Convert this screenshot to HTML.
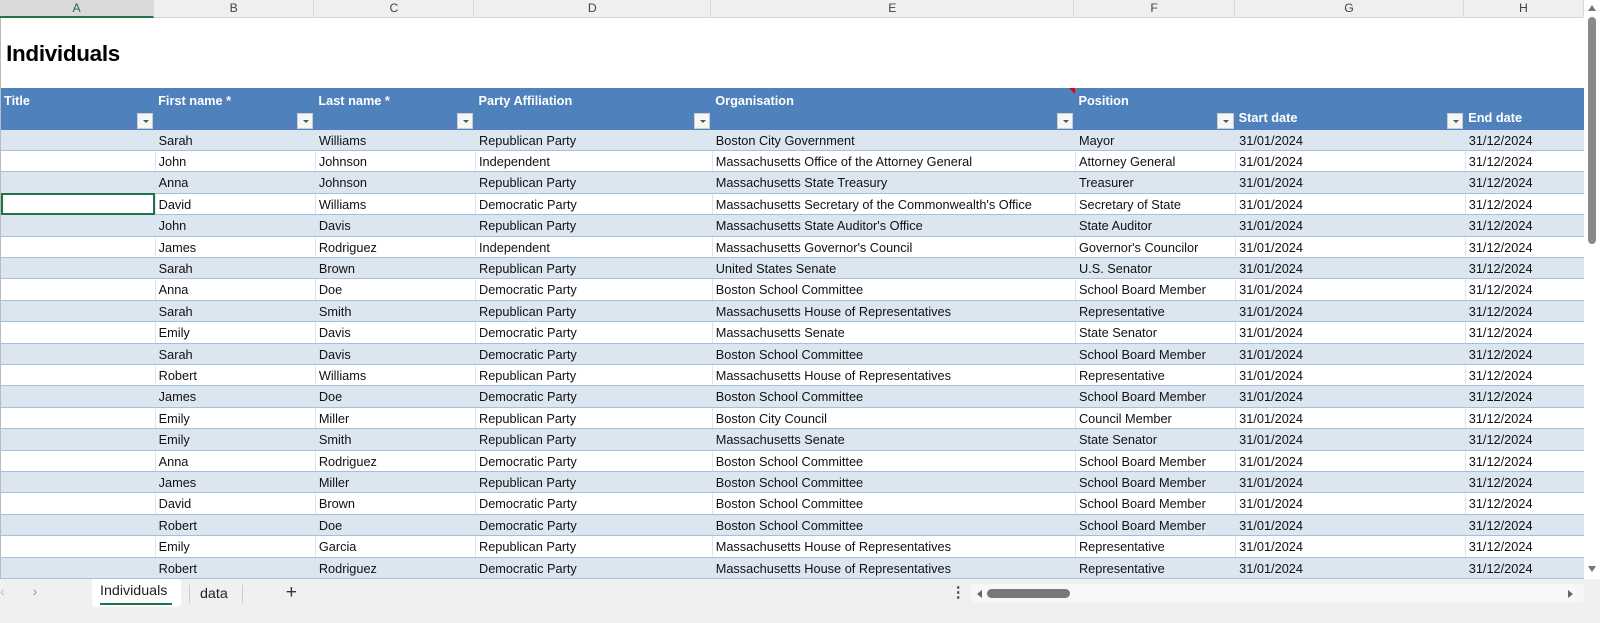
<!DOCTYPE html>
<html><head><style>
*{margin:0;padding:0;box-sizing:border-box}
body{width:1600px;height:611px;overflow:hidden;background:#fff;font-family:"Liberation Sans",sans-serif;position:relative}
#wrap{position:absolute;left:0;top:0;width:1568px;height:599px;zoom:1.0204}
#colh{position:absolute;left:0;top:0;height:18px;width:1552px;background:#efefef;border-bottom:1px solid #d4d4d4}
#colh div{position:absolute;top:0;height:18px;line-height:17px;text-align:center;font-size:12px;color:#444;border-right:1px solid #d8d8d8}
#sheet{position:absolute;left:0;top:18px;width:1552px;height:549px;background:#fff;overflow:hidden;border-left:1px solid #bbb}
h1{position:absolute;left:5px;top:22px;font-size:22px;font-weight:bold;color:#000;letter-spacing:-0.3px}
table{position:absolute;left:0;top:68px;border-collapse:collapse;table-layout:fixed;width:1552px;font-size:12.5px}
td{height:20px;padding:1px 3px 0;white-space:nowrap;overflow:hidden;border-right:1px solid #dfe5ee;border-bottom:1px solid #a7bfde;color:#111;line-height:19px}
tr.o td{background:#dce6f1}
tr.o td:first-child{border-right-color:#dce6f1}
tr.hd td{background:#4f81bd;color:#fff;font-weight:bold;height:41px;vertical-align:top;position:relative;border:none;padding-top:3px}
.dd{position:absolute;right:2px;bottom:1px;width:16px;height:15px;background:#f6f6f6;border:1px solid #ccc}
.dd:after{content:"";position:absolute;left:5px;top:6px;border-left:3px solid transparent;border-right:3px solid transparent;border-top:3px solid #555}
.b2{position:absolute;left:3px;bottom:2px}
#vs{position:absolute;left:1552px;top:0;width:16px;height:567px;background:#fff}
#bot{position:absolute;left:0;top:567px;width:1600px;height:44px;background:#f0f0f0}
</style></head><body>
<div id="wrap">
<div id="colh">
<div style="left:0;width:151px;background:#d9d9d9;color:#1e6e3c;border-bottom:2px solid #217346">A</div>
<div style="left:151px;width:157px">B</div><div style="left:308px;width:157px">C</div>
<div style="left:465px;width:232px">D</div><div style="left:697px;width:356px">E</div>
<div style="left:1053px;width:157px">F</div><div style="left:1210px;width:225px">G</div>
<div style="left:1435px;width:117px">H</div></div>
<div id="sheet">
<h1>Individuals</h1>
<table>
<colgroup><col style="width:151px"><col style="width:157px"><col style="width:157px"><col style="width:232px"><col style="width:356px"><col style="width:157px"><col style="width:225px"><col style="width:117px"></colgroup>
<tr class="hd"><td>Title<span class="dd"></span></td><td>First name *<span class="dd"></span></td><td>Last name *<span class="dd"></span></td><td>Party Affiliation<span class="dd"></span></td><td>Organisation<span class="dd"></span><span style="position:absolute;right:0;top:0;border-left:6px solid transparent;border-top:6px solid #e00"></span></td><td>Position<span class="dd"></span></td><td><span class="b2">Start date</span><span class="dd"></span></td><td><span class="b2">End date</span></td></tr>
<tr class="o"><td></td><td>Sarah</td><td>Williams</td><td>Republican Party</td><td>Boston City Government</td><td>Mayor</td><td>31/01/2024</td><td>31/12/2024</td></tr>
<tr><td></td><td>John</td><td>Johnson</td><td>Independent</td><td>Massachusetts Office of the Attorney General</td><td>Attorney General</td><td>31/01/2024</td><td>31/12/2024</td></tr>
<tr class="o"><td></td><td>Anna</td><td>Johnson</td><td>Republican Party</td><td>Massachusetts State Treasury</td><td>Treasurer</td><td>31/01/2024</td><td>31/12/2024</td></tr>
<tr><td style="outline:2px solid #217346;outline-offset:-2px"></td><td>David</td><td>Williams</td><td>Democratic Party</td><td>Massachusetts Secretary of the Commonwealth's Office</td><td>Secretary of State</td><td>31/01/2024</td><td>31/12/2024</td></tr>
<tr class="o"><td></td><td>John</td><td>Davis</td><td>Republican Party</td><td>Massachusetts State Auditor's Office</td><td>State Auditor</td><td>31/01/2024</td><td>31/12/2024</td></tr>
<tr><td></td><td>James</td><td>Rodriguez</td><td>Independent</td><td>Massachusetts Governor's Council</td><td>Governor's Councilor</td><td>31/01/2024</td><td>31/12/2024</td></tr>
<tr class="o"><td></td><td>Sarah</td><td>Brown</td><td>Republican Party</td><td>United States Senate</td><td>U.S. Senator</td><td>31/01/2024</td><td>31/12/2024</td></tr>
<tr><td></td><td>Anna</td><td>Doe</td><td>Democratic Party</td><td>Boston School Committee</td><td>School Board Member</td><td>31/01/2024</td><td>31/12/2024</td></tr>
<tr class="o"><td></td><td>Sarah</td><td>Smith</td><td>Republican Party</td><td>Massachusetts House of Representatives</td><td>Representative</td><td>31/01/2024</td><td>31/12/2024</td></tr>
<tr><td></td><td>Emily</td><td>Davis</td><td>Democratic Party</td><td>Massachusetts Senate</td><td>State Senator</td><td>31/01/2024</td><td>31/12/2024</td></tr>
<tr class="o"><td></td><td>Sarah</td><td>Davis</td><td>Democratic Party</td><td>Boston School Committee</td><td>School Board Member</td><td>31/01/2024</td><td>31/12/2024</td></tr>
<tr><td></td><td>Robert</td><td>Williams</td><td>Republican Party</td><td>Massachusetts House of Representatives</td><td>Representative</td><td>31/01/2024</td><td>31/12/2024</td></tr>
<tr class="o"><td></td><td>James</td><td>Doe</td><td>Democratic Party</td><td>Boston School Committee</td><td>School Board Member</td><td>31/01/2024</td><td>31/12/2024</td></tr>
<tr><td></td><td>Emily</td><td>Miller</td><td>Republican Party</td><td>Boston City Council</td><td>Council Member</td><td>31/01/2024</td><td>31/12/2024</td></tr>
<tr class="o"><td></td><td>Emily</td><td>Smith</td><td>Republican Party</td><td>Massachusetts Senate</td><td>State Senator</td><td>31/01/2024</td><td>31/12/2024</td></tr>
<tr><td></td><td>Anna</td><td>Rodriguez</td><td>Democratic Party</td><td>Boston School Committee</td><td>School Board Member</td><td>31/01/2024</td><td>31/12/2024</td></tr>
<tr class="o"><td></td><td>James</td><td>Miller</td><td>Republican Party</td><td>Boston School Committee</td><td>School Board Member</td><td>31/01/2024</td><td>31/12/2024</td></tr>
<tr><td></td><td>David</td><td>Brown</td><td>Democratic Party</td><td>Boston School Committee</td><td>School Board Member</td><td>31/01/2024</td><td>31/12/2024</td></tr>
<tr class="o"><td></td><td>Robert</td><td>Doe</td><td>Democratic Party</td><td>Boston School Committee</td><td>School Board Member</td><td>31/01/2024</td><td>31/12/2024</td></tr>
<tr><td></td><td>Emily</td><td>Garcia</td><td>Republican Party</td><td>Massachusetts House of Representatives</td><td>Representative</td><td>31/01/2024</td><td>31/12/2024</td></tr>
<tr class="o"><td></td><td>Robert</td><td>Rodriguez</td><td>Democratic Party</td><td>Massachusetts House of Representatives</td><td>Representative</td><td>31/01/2024</td><td>31/12/2024</td></tr>
<tr><td></td><td>Michael</td><td>Doe</td><td>Republican Party</td><td>Massachusetts Senate</td><td>State Senator</td><td>31/01/2024</td><td>31/12/2024</td></tr>
</table></div>
<div id="vs"><div style="position:absolute;left:4px;top:5px;border-left:4px solid transparent;border-right:4px solid transparent;border-bottom:6px solid #777"></div>
<div style="position:absolute;left:4px;top:17px;width:8px;height:222px;background:#8a8a8a;border-radius:4px"></div>
<div style="position:absolute;left:4px;top:555px;border-left:4px solid transparent;border-right:4px solid transparent;border-top:6px solid #777"></div></div>
<div id="bot">
<span style="position:absolute;left:0;top:5px;color:#bbb;font-size:14px">&#8249;</span>
<span style="position:absolute;left:32px;top:5px;color:#999;font-size:14px">&#8250;</span>
<div style="position:absolute;left:90px;top:0;width:87px;height:28px;background:#fff;border-radius:0 0 4px 4px"></div>
<span style="position:absolute;left:98px;top:4px;font-size:14px;color:#222">Individuals</span>
<div style="position:absolute;left:98px;top:24px;width:71px;height:2px;background:#217346"></div>
<div style="position:absolute;left:185px;top:6px;width:1px;height:18px;background:#ccc"></div>
<span style="position:absolute;left:196px;top:7px;font-size:14px;color:#222">data</span>
<div style="position:absolute;left:237px;top:6px;width:1px;height:18px;background:#ccc"></div>
<span style="position:absolute;left:280px;top:2px;font-size:19px;color:#333">+</span>
<span style="position:absolute;left:932px;top:6px;font-size:14px;color:#444;font-weight:bold">&#8942;</span>
<div style="position:absolute;left:952px;top:5px;width:600px;height:18px;background:#f7f7f7;border-radius:3px"></div>
<div style="position:absolute;left:957px;top:11px;border-top:4px solid transparent;border-bottom:4px solid transparent;border-right:5px solid #666"></div>
<div style="position:absolute;left:967px;top:10px;width:82px;height:9px;background:#777;border-radius:5px"></div>
<div style="position:absolute;left:1537px;top:11px;border-top:4px solid transparent;border-bottom:4px solid transparent;border-left:5px solid #666"></div>
</div>
</div>
</body></html>
